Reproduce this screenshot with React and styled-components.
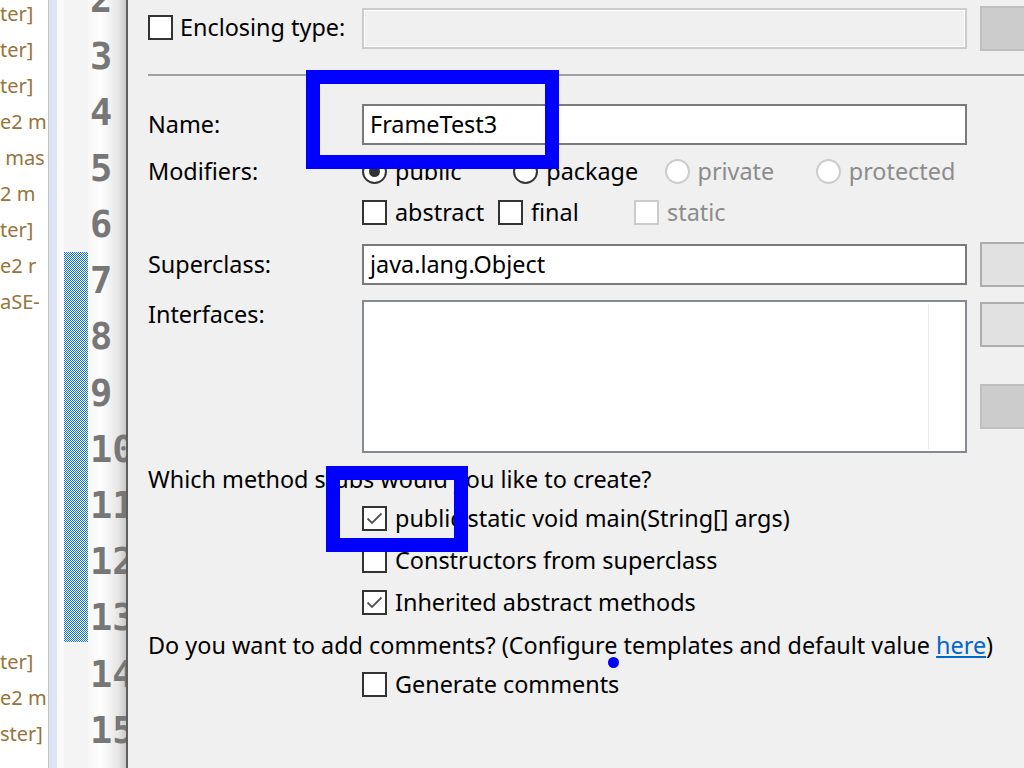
import styled, { createGlobalStyle } from "styled-components";

const GlobalStyle = createGlobalStyle`
  html, body {
    margin: 0;
    padding: 0;
    overflow: hidden;
  }
  body {
    font-family: "Noto Sans", "Liberation Sans", sans-serif;
  }
`;

const UI_FONT = `"Noto Sans", "Noto Sans CJK KR", "Liberation Sans", sans-serif`;

const sidebarLines = [
  "ter]", "ter]", "ter]", "e2 m", " mas", "2 m", "ter]", "e2 r", "aSE-",
  "", "", "", "", "", "", "", "", "",
  "ter]", "e2 m", "ster]",
];

const lineNumbers = [2, 3, 4, 5, 6, 7, 8, 9, 10, 11, 12, 13, 14, 15, 16];

const CheckMark = () => (
  <svg width="21" height="21" viewBox="0 0 21 21">
    <polyline points="3.5,10.5 8,15 17.5,5.5" fill="none" stroke="#555" strokeWidth="1.8" />
  </svg>
);

// dithered quick-diff marker in the overview ruler
const MarkerPattern = () => (
  <svg width="24" height="390" shapeRendering="crispEdges">
    <defs>
      <pattern id="dither" width="2" height="2" patternUnits="userSpaceOnUse">
        <rect width="2" height="2" fill="#ffffff" />
        <rect width="1" height="1" fill="#0a6fdc" />
        <rect x="1" y="1" width="1" height="1" fill="#0a6fdc" />
      </pattern>
    </defs>
    <rect width="24" height="390" fill="url(#dither)" />
  </svg>
);

const Check = ({ checked, disabled }) => (
  <CheckBox $disabled={disabled}>{checked ? <CheckMark /> : null}</CheckBox>
);

const Radio = ({ selected, disabled }) => (
  <RadioCircle $disabled={disabled}>{selected ? <RadioDot /> : null}</RadioCircle>
);

const App = () => {
  return (
    <Page>
      <GlobalStyle />
      <Sidebar>
        {sidebarLines.map((line, i) => (
          <SidebarLine key={i}>{line}</SidebarLine>
        ))}
      </Sidebar>
      <SidebarBorder />
      <Ruler>
        <ChangeMarker>
          <MarkerPattern />
        </ChangeMarker>
      </Ruler>
      <Gutter>
        {lineNumbers.map((n) => (
          <LineNumber key={n}>{n}</LineNumber>
        ))}
      </Gutter>

      <Dialog>
        <FormRow $height={45}>
          <CheckLabel>
            <Check />
            <span>Enclosing type:</span>
          </CheckLabel>
          <TextField $disabled />
          <SideButton $disabled />
        </FormRow>

        <Separator />

        <FormRow $height={41} $top={28}>
          <Label>Name:</Label>
          <TextField>FrameTest3</TextField>
        </FormRow>

        <FormRow $height={25} $top={14}>
          <Label>Modifiers:</Label>
          <OptionGroup>
            <Option $width={154}><Radio selected /><span>public</span></Option>
            <Option $width={154}><Radio /><span>package</span></Option>
            <Option $width={154} $disabled><Radio disabled /><span>private</span></Option>
            <Option $width={154} $disabled><Radio disabled /><span>protected</span></Option>
          </OptionGroup>
        </FormRow>

        <FormRow $height={25} $top={16}>
          <span />
          <OptionGroup>
            <Option $width={136}><Check /><span>abstract</span></Option>
            <Option $width={136}><Check /><span>final</span></Option>
            <Option $width={136} $disabled><Check disabled /><span>static</span></Option>
          </OptionGroup>
        </FormRow>

        <FormRow $height={45} $top={17}>
          <Label>Superclass:</Label>
          <TextField>java.lang.Object</TextField>
          <SideButton />
        </FormRow>

        <FormRow $height={153} $top={13} $align="start">
          <Label $pad={2}>Interfaces:</Label>
          <ListBox>
            <ListDivider />
          </ListBox>
          <ButtonColumn>
            <SideButton />
            <SideButton $disabled />
          </ButtonColumn>
        </FormRow>

        <Sentence $top={13}>Which method stubs would you like to create?</Sentence>

        <CheckList $top={14}>
          <Option><Check checked /><span>public static void main(String[] args)</span></Option>
          <Option><Check /><span>Constructors from superclass</span></Option>
          <Option><Check checked /><span>Inherited abstract methods</span></Option>
        </CheckList>

        <Sentence $top={17}>
          Do you want to add comments? (Configure templates and default value <Link>here</Link>)
        </Sentence>

        <CheckList $top={14}>
          <Option><Check /><span>Generate comments</span></Option>
        </CheckList>
      </Dialog>

      <Highlight $left={306} $top={70} $width={253} $height={99} />
      <Highlight $left={326} $top={466} $width={142} $height={86} />
      <Pointer />
    </Page>
  );
};

export default App;

const Page = styled.div`
  position: relative;
  width: 1024px;
  height: 768px;
  display: flex;
  overflow: hidden;
  background: #fff;
  font-family: ${UI_FONT};
`;

const Sidebar = styled.div`
  width: 48px;
  flex-shrink: 0;
  overflow: hidden;
  background: #fff;
  margin-top: -4px;
`;

const SidebarLine = styled.div`
  height: 36px;
  line-height: 36px;
  font-size: 20px;
  color: #96743c;
  white-space: pre;
`;

const SidebarBorder = styled.div`
  width: 9px;
  box-sizing: border-box;
  flex-shrink: 0;
  border-left: 1px solid #c4c4c4;
  background: #dfe4f4;
`;

const Ruler = styled.div`
  width: 31px;
  flex-shrink: 0;
  background: linear-gradient(to right, #fafafa 0 7px, #f4f4f4 7px);
  padding: 252px 0 0 7px;
  box-sizing: border-box;
`;

const ChangeMarker = styled.div`
  width: 24px;
  height: 390px;
  line-height: 0;
`;

const Gutter = styled.div`
  width: 40px;
  flex-shrink: 0;
  overflow: hidden;
  padding-left: 2px;
  box-sizing: border-box;
  background: linear-gradient(to right, #f7f7f7 0%, #fdfdfd 35%, #e6e6e6 80%, #c8c8c8 100%);
  border-right: 2px solid #5e5e5e;
`;

const LineNumber = styled.div`
  height: 56.2px;
  line-height: 56.2px;
  font-family: "DejaVu Sans Mono", "Liberation Mono", monospace;
  font-weight: bold;
  font-size: 37px;
  color: #777;
  white-space: nowrap;
  &:first-child {
    margin-top: -27.7px;
  }
`;

const Dialog = styled.div`
  flex: 1;
  min-width: 0;
  background: #f0f0f0;
  padding: 6px 0 0 20px;
  font-size: 23.4px;
  line-height: 25px;
  color: #000;
`;

const FormRow = styled.div`
  display: grid;
  grid-template-columns: 201px 605px 100px;
  grid-template-rows: ${(p) => p.$height}px;
  column-gap: 13px;
  align-items: ${(p) => p.$align || "center"};
  height: ${(p) => p.$height}px;
  margin-top: ${(p) => p.$top || 0}px;
`;

const Label = styled.div`
  white-space: nowrap;
  padding-top: ${(p) => p.$pad || 0}px;
`;

const CheckLabel = styled.div`
  display: flex;
  align-items: center;
  gap: 7px;
  white-space: nowrap;
  margin-top: -2px;
`;

const TextField = styled.div`
  height: 41px;
  box-sizing: border-box;
  border: 2px solid ${(p) => (p.$disabled ? "#cccccc" : "#7a7a7a")};
  box-shadow: ${(p) => (p.$disabled ? "inset 0 0 0 1px #ffffff" : "none")};
  background: ${(p) => (p.$disabled ? "#f0f0f0" : "#ffffff")};
  padding: 0 6px;
  display: flex;
  align-items: center;
  white-space: nowrap;
`;

const SideButton = styled.div`
  height: 45px;
  box-sizing: border-box;
  border: 2px solid ${(p) => (p.$disabled ? "#bfbfbf" : "#adadad")};
  background: ${(p) => (p.$disabled ? "#cccccc" : "#e1e1e1")};
`;

const ButtonColumn = styled.div`
  display: flex;
  flex-direction: column;
  gap: 37px;
  padding-top: 2px;
`;

const ListBox = styled.div`
  height: 153px;
  box-sizing: border-box;
  border: 2px solid #858a92;
  background: #fff;
  display: flex;
  justify-content: flex-end;
  padding: 2px 36px 2px 0;
`;

const ListDivider = styled.div`
  width: 1px;
  background: #e8eef8;
`;

const Separator = styled.div`
  height: 2px;
  margin-top: 23px;
  background: #a0a0a0;
`;

const OptionGroup = styled.div`
  display: flex;
  white-space: nowrap;
`;

const Option = styled.div`
  display: flex;
  align-items: center;
  gap: 8px;
  height: 25px;
  width: ${(p) => (p.$width ? `${p.$width}px` : "auto")};
  color: ${(p) => (p.$disabled ? "#8c8c8c" : "#000")};
  white-space: nowrap;
`;

const CheckBox = styled.div`
  width: 25px;
  height: 25px;
  box-sizing: border-box;
  flex-shrink: 0;
  border: 2px solid ${(p) => (p.$disabled ? "#cccccc" : "#333333")};
  background: #fff;
  display: flex;
  align-items: center;
  justify-content: center;
`;

const RadioCircle = styled.div`
  width: 25px;
  height: 25px;
  box-sizing: border-box;
  flex-shrink: 0;
  border-radius: 50%;
  border: 2px solid ${(p) => (p.$disabled ? "#cccccc" : "#333333")};
  background: #fff;
  display: flex;
  align-items: center;
  justify-content: center;
`;

const RadioDot = styled.div`
  width: 11px;
  height: 11px;
  border-radius: 50%;
  background: #333;
`;

const Sentence = styled.div`
  height: 26px;
  line-height: 26px;
  margin-top: ${(p) => p.$top}px;
  white-space: nowrap;
`;

const CheckList = styled.div`
  display: flex;
  flex-direction: column;
  gap: 17px;
  padding-left: 214px;
  margin-top: ${(p) => p.$top}px;
`;

const Link = styled.span`
  color: #0066cc;
  text-decoration: underline;
`;

const Highlight = styled.div`
  position: absolute;
  left: ${(p) => p.$left}px;
  top: ${(p) => p.$top}px;
  width: ${(p) => p.$width}px;
  height: ${(p) => p.$height}px;
  box-sizing: border-box;
  border: 14px solid #0000ff;
`;

const Pointer = styled.div`
  position: absolute;
  left: 608px;
  top: 657px;
  width: 11px;
  height: 11px;
  border-radius: 50%;
  background: #0000ff;
`;
